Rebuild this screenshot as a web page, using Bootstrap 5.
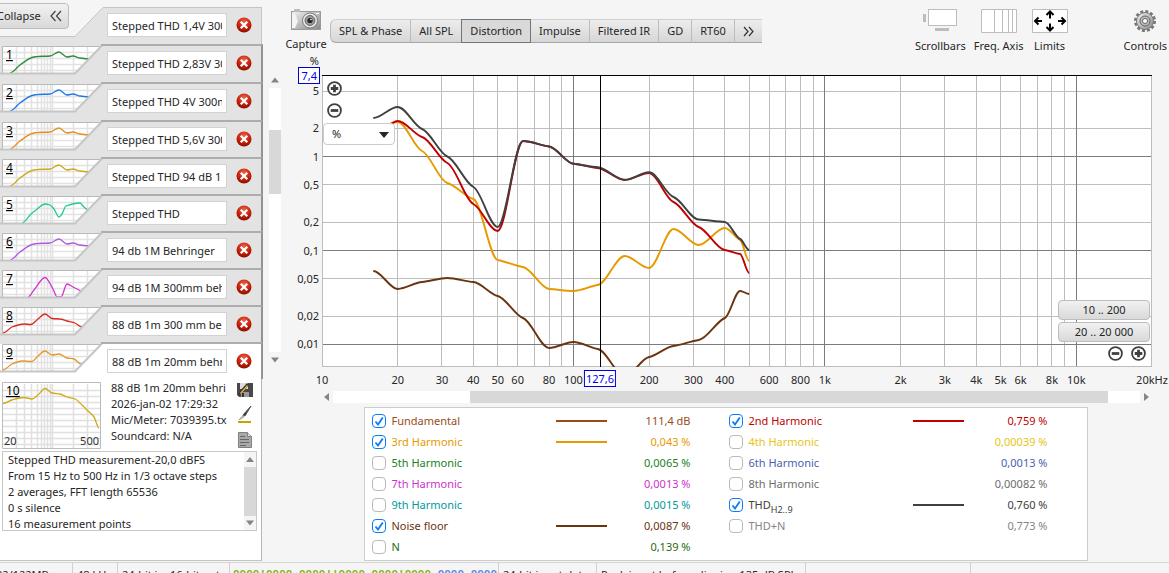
<!DOCTYPE html>
<html lang="en">
<head>
<meta charset="utf-8">
<meta name="viewport" content="width=device-width, initial-scale=1">
<title>Distortion measurements</title>
<link href="https://cdn.jsdelivr.net/npm/bootstrap@5.3.0/dist/css/bootstrap.min.css" rel="stylesheet">
<style>
:root { --ui-bg:#f5f5f5; --ink:#262626; }
body { font-family:"Noto Sans","Open Sans",sans-serif; font-size:11px; line-height:16px; color:var(--ink); background:var(--ui-bg); overflow:hidden; }
svg { display:block; }
.btn { --bs-btn-font-size:11px; --bs-btn-line-height:16px; --bs-btn-color:var(--ink); }
.soft-btn { background:linear-gradient(#f1f1f1,#d9d9d9); border:1px solid #bdbdbd; border-radius:4px; padding:0 8px; }
.icon-btn { border:0; background:none; padding:0; line-height:0; }

/* measurement list */
.side { width:263px; flex:none; }
.tabs { padding-top:7px; }
.tab-row { height:37px; }
.tab-row.tall { height:38px; }
.tab-body { background:#e3e3e3; border-top:2px solid #adadad; border-right:2px solid #929292; padding:5px 9px 0 0; }
.tab-row.first .tab-body { border-top:1px solid #c4c4c4; border-right:1px solid #c4c4c4; margin-right:1px; }
.tab-row.current .tab-body { background:#fff; }
.tab-body input { width:120px; height:24px; border:1px solid #d2d2d2; border-radius:0; padding:0 4px; line-height:16px; color:var(--ink); background:#fff; }
.collapse-btn { left:-12px; top:3px; width:81px; height:26px; padding-right:6px; }
.details { background:#fff; border-right:1px solid #b5b5b5; border-bottom:1px solid #c4c4c4; padding:3px 4px 29px 2px; margin-right:1px; }
.details .meta { width:117px; overflow:hidden; white-space:nowrap; margin:-2px 0 0 10px; }
.notes { border:1px solid #c8c8c8; height:80px; margin-top:2px; }
.notes textarea { border:0; resize:none; overflow:hidden; padding:0 0 0 5px; line-height:16px; color:var(--ink); white-space:pre; background:#fff; outline:0; }
.track { background:#fff; }
.thumb { background:#d8d8d8; }
.notes .vbar { width:12px; background:#f5f5f5; }
.list-bar { width:12px; padding-top:76px; margin:0 1px 197px 6px; }

/* header */
.topbar { height:75px; padding:8px 2px 0 0; }
.tool { text-align:center; white-space:nowrap; line-height:16px; color:var(--ink); }
.tool span { display:block; }
.capture { min-width:42px; margin-left:3px; }
.controls { margin-left:48px; }
.views { padding-top:11px; margin-left:3px; }
.views .btn { background:linear-gradient(#ededed,#d6d6d6); border:1px solid #bcbcbc; border-top-color:#d0d0d0; border-bottom-color:#a5a5a5; height:24px; padding:0 8px; white-space:nowrap; }
.views .btn.active { background:#d9d9d9; color:var(--ink); border:1px solid #757575; }

/* plot */
.plot-wrap { margin:0 17px 0 40px; }
.plot, .plot > #graph { width:100%; height:292px; }
.ylab { position:absolute; right:100%; margin-right:3px; transform:translateY(-50%); white-space:nowrap; }
.unit { top:-14px; }
.xaxis { height:24px; }
.xlab { position:absolute; transform:translateX(-50%); white-space:nowrap; top:5px; }
.readout { color:#0000f0; background:#fff; border:1px solid #0000d8; position:absolute; white-space:nowrap; line-height:15px; }
.level { right:100%; margin-right:2px; top:-8px; padding:0 2px; }
.freq { top:3px; padding:0 1px; }
.combo { position:absolute; left:1px; top:48px; width:72px; height:22px; border:1px solid #ccc; border-radius:4px; background:#fff; padding:0 8px; line-height:18px; appearance:none; color:var(--ink); }
.over { position:absolute; }
.zin { left:5px; top:6px; }
.zout { left:5px; top:28px; }
.caret { width:10px; height:6px; left:57px; top:57px; }
.range-btns { right:2px; top:225px; width:92px; }
.range-btns .btn { display:block; height:20px; width:100%; }
.range-btns .btn + .btn { margin-top:2px; }
.hbar { margin:0 17px 0 40px; height:12px; }

/* legend */
.legend { width:724px; max-width:100%; background:#fff; border:1px solid #ccc; padding:2px 0 3px 7px; margin-top:4px; }
.legend .entry { height:21px; width:357px; }
.legend input { appearance:none; width:14px; height:14px; margin:0 6px 0 0; border:1px solid #bababa; border-radius:4px; background:#fff; flex:none; }
.legend input:checked { border-color:#0a7cf5; background:url("data:image/svg+xml,%3Csvg xmlns='http://www.w3.org/2000/svg' viewBox='0 0 12 12'%3E%3Cpath d='M2.5 6.5l2.5 3L9.8 2.5' fill='none' stroke='%230a7cf5' stroke-width='1.8'/%3E%3C/svg%3E") center/12px; }
.legend .name { width:164px; }
.legend .swatch { width:51px; height:2px; }
.legend .val { width:84px; text-align:right; }
.legend sub { font-size:9px; bottom:-4px; }

.status { border-top:1px solid #d6d6d6; white-space:nowrap; line-height:24px; margin-top:1px; }
.status > div { border-right:1px solid #d0d0d0; overflow:hidden; flex:none; padding-left:4px; height:26px; }
.status .bits { font-family:"Liberation Mono",monospace; font-weight:bold; color:#86b820; line-height:22px; padding-left:3px; }
.mem { margin-left:-8px; }
</style>
</head>
<body>
<svg width="0" height="0" class="position-absolute" aria-hidden="true">
  <defs>
    <radialGradient id="redBall" cx=".5" cy=".3" r=".7"><stop offset="0" stop-color="#ee6550"/><stop offset=".6" stop-color="#c72008"/><stop offset="1" stop-color="#8c0d00"/></radialGradient>
    <linearGradient id="metal" x1="0" y1="0" x2="1" y2="1"><stop offset="0" stop-color="#f2f2f2"/><stop offset="1" stop-color="#888"/></linearGradient>
    <symbol id="close" viewBox="0 0 16 16"><circle cx="8" cy="8" r="7.5" fill="url(#redBall)"/><path d="M5.500 5.500l5 5M10.500 5.500l-5 5" stroke="#fff" stroke-width="2.2" stroke-linecap="square"/></symbol>
    <symbol id="plus" viewBox="0 0 14 14"><circle cx="7" cy="7" r="6" fill="#fff" stroke="#404040" stroke-width="1.7"/><path d="M3.500 7h7M7 3.500v7" stroke="#404040" stroke-width="2.6"/></symbol>
    <symbol id="minus" viewBox="0 0 14 14"><circle cx="7" cy="7" r="6" fill="#fff" stroke="#404040" stroke-width="1.7"/><path d="M3.500 7h7" stroke="#404040" stroke-width="2.6"/></symbol>
    <symbol id="up" viewBox="0 0 12 12"><path d="M2 8.500l4-5 4 5z" fill="#858585"/></symbol>
    <symbol id="down" viewBox="0 0 12 12"><path d="M2 3.500l4 5 4-5z" fill="#858585"/></symbol>
    <clipPath id="tabClip"><path d="M3 2H102L75 29H3z"/></clipPath>
  </defs>
</svg>

<div class="d-flex flex-column min-vh-100">
<main class="d-flex flex-grow-1">
  <aside class="side position-relative d-flex flex-column">
    <button class="btn soft-btn collapse-btn position-absolute d-flex align-items-center justify-content-between z-1" type="button">Collapse
      <svg width="12" height="12" viewBox="0 0 12 12" fill="none" stroke="#404040" stroke-width="1.2"><path d="M5.500 1L1 6l4.500 5M11 1L6.500 6l4.500 5"/></svg></button>
    <div class="tabs" id="tabs"></div>
    <section class="details flex-grow-1">
      <div class="d-flex">
        <svg width="99" height="67" viewBox="2 0 99 67" id="thumb10" class="flex-shrink-0"></svg>
        <div class="meta flex-grow-1">88 dB 1m 20mm behri<br>2026-jan-02 17:29:32<br>Mic/Meter: 7039395.tx<br>Soundcard: N/A</div>
        <div class="d-flex flex-column ms-2 me-1">
          <button class="icon-btn" type="button" aria-label="Save"><svg width="16" height="16" viewBox="0 0 16 16"><path d="M0 1h3v6h8V1h5v14H2l-2-2z" fill="#484848"/><path d="M3 1h8v6H3z" fill="#ddd"/><path d="M4 10h8v5H4z" fill="#999"/><path d="M5 11h2v4H5z" fill="#333"/><path d="M1 14l2-5 7-8 2 2-7 8z" fill="#333"/><path d="M3 11l7-8 1 1-7 8z" fill="#e7b53c"/></svg></button>
          <button class="icon-btn mt-2" type="button" aria-label="Trace colour"><svg width="16" height="18" viewBox="0 0 16 18"><path d="M14 0L6 9l2 1z" fill="#303030" stroke="#555"/><path d="M6 9l-4 5 5-3z" fill="#c7c7c7" stroke="#777" stroke-width=".5"/><path d="M1 16h13" stroke="#cca000" stroke-width="2"/></svg></button>
          <button class="icon-btn mt-2" type="button" aria-label="Notes"><svg width="16" height="16" viewBox="0 0 16 16"><path d="M1.500.5h9l4 4v11h-13z" fill="#a9a9a9" stroke="#808080"/><path d="M10.500.5v4h4" fill="#ddd" stroke="#808080"/><path d="M3 4.500h5M3 7.500h9M3 10.500h9M3 13.500h6" stroke="#666"/></svg></button>
        </div>
      </div>
      <div class="notes d-flex">
        <textarea class="flex-grow-1" readonly aria-label="Notes text" rows="5">Stepped THD measurement-20,0 dBFS
From 15 Hz to 500 Hz in 1/3 octave steps
2 averages, FFT length 65536
0 s silence
16 measurement points</textarea>
        <div class="vbar d-flex flex-column"><svg width="12" height="15" viewBox="0 -1 12 14"><use href="#up" width="12" height="12"/></svg><div class="thumb flex-grow-1"></div><svg width="12" height="14" viewBox="0 -1 12 14"><use href="#down" width="12" height="12"/></svg></div>
      </div>
    </section>
  </aside>

  <div class="list-bar d-flex flex-column flex-shrink-0">
    <svg class="mb-1 flex-shrink-0" width="12" height="8" viewBox="0 2 12 8"><use href="#up" width="12" height="12"/></svg>
    <div class="track flex-grow-1 d-flex flex-column"><div style="height:16%"></div><div class="thumb" style="height:24%"></div></div>
    <svg class="mt-1 flex-shrink-0" width="12" height="8" viewBox="0 2 12 8"><use href="#down" width="12" height="12"/></svg>
  </div>

  <section class="flex-grow-1" style="min-width:0">
    <header class="topbar d-flex align-items-start">
      <button class="icon-btn tool capture" type="button"><svg class="mx-auto mb-1" width="30" height="24" viewBox="0 -2 30 24"><rect x=".5" y="1.500" width="29" height="18" fill="url(#metal)" stroke="#999"/><path d="M1 4h3l3 7-3 7H1z" fill="#f4f4f4"/><path d="M3 -1h6v3H3z" fill="#bbb"/><circle cx="19" cy="10.500" r="7.500" fill="#eee" stroke="#777"/><circle cx="19" cy="10.500" r="5" fill="#999" stroke="#666"/><circle cx="19" cy="10.500" r="2.600" fill="#252525"/><circle cx="20" cy="9.500" r=".8" fill="#fff"/><path d="M25 3.500h3" stroke="#fff"/></svg><span>Capture</span></button>
      <div class="btn-group views" role="group" aria-label="Graph">
        <button class="btn" type="button">SPL &amp; Phase</button><button class="btn" type="button">All SPL</button><button class="btn active" type="button">Distortion</button><button class="btn" type="button">Impulse</button><button class="btn" type="button">Filtered IR</button><button class="btn" type="button">GD</button><button class="btn" type="button">RT60</button><button class="btn rounded-0 border-end-0 px-2" type="button" aria-label="More"><svg width="11" height="12" viewBox="0 0 11 12" fill="none" stroke="#333" stroke-width="1.2"><path d="M1 2l4 4.500L1 11M6 2l4 4.500L6 11"/></svg></button>
      </div>
      <div class="d-flex ms-auto gap-2">
        <button class="icon-btn tool" type="button"><svg class="mx-auto mb-1" width="34" height="26" viewBox="0 0 34 26"><rect x="5.500" y="1.500" width="28" height="16" fill="#fff" stroke="#bdbdbd"/><path d="M0 6h3v8H0zM12 20h14v3H12z" fill="#bdbdbd"/></svg><span>Scrollbars</span></button>
        <button class="icon-btn tool" type="button"><svg class="mx-auto mb-1" width="36" height="26" viewBox="0 0 36 26"><path d="M.5 1.500h35v23H.5zM13.500 1v24M21.500 1v24M27.500 1v24M31.500 1v24" fill="#fff" stroke="#bdbdbd"/></svg><span>Freq. Axis</span></button>
        <button class="icon-btn tool" type="button"><svg class="mx-auto mb-1" width="36" height="26" viewBox="0 0 36 26"><path d="M.5 1.500h35v23H.5z" fill="#fff" stroke="#bdbdbd"/><path d="M3 13h7M6.500 9.500L3 13l3.500 3.500M33 13h-7M29.500 9.500L33 13l-3.500 3.500M18 3.500v7M14.500 7L18 3.500 21.500 7M18 22.500v-7M14.500 19l3.500 3.500 3.500-3.500" fill="none" stroke="#000" stroke-width="2"/></svg><span>Limits</span></button>
        <button class="icon-btn tool controls" type="button"><svg class="mx-auto mb-1" width="24" height="26" viewBox="-12 -13 24 26"><circle r="9.500" fill="none" stroke="#777" stroke-width="3" stroke-dasharray="2.970 2"/><circle r="8.500" fill="url(#metal)" stroke="#777"/><circle r="5" fill="#bbb" stroke="#666"/><circle r="2.500" fill="#fff" stroke="#666"/></svg><span>Controls</span></button>
      </div>
    </header>

    <div class="plot-wrap">
      <div class="plot position-relative" id="plot">
        <span class="ylab unit">%</span>
        <svg viewBox="0 -1 830 292" preserveAspectRatio="none" id="graph" aria-label="Distortion graph"></svg>
        <span class="readout level">7,4</span>
        <button class="icon-btn over zin" type="button" aria-label="Zoom in vertically"><svg width="15" height="15"><use href="#plus"/></svg></button>
        <button class="icon-btn over zout" type="button" aria-label="Zoom out vertically"><svg width="15" height="15"><use href="#minus"/></svg></button>
        <select class="combo" aria-label="Unit"><option>%</option></select>
        <svg class="over caret pe-none" viewBox="0 0 10 6"><path d="M0 0h10L5 6z" fill="#262626"/></svg>
        <div class="over range-btns"><button class="btn soft-btn" type="button">10 .. 200</button><button class="btn soft-btn" type="button">20 .. 20 000</button>
          <div class="d-flex justify-content-end gap-2 pt-1 pe-1"><button class="icon-btn" type="button" aria-label="Zoom out"><svg width="15" height="15"><use href="#minus"/></svg></button><button class="icon-btn" type="button" aria-label="Zoom in"><svg width="15" height="15"><use href="#plus"/></svg></button></div></div>
      </div>
      <div class="position-relative xaxis" id="xaxis"></div>
    </div>
    <div class="hbar d-flex align-items-center">
      <svg class="flex-shrink-0" width="11" height="12"><path d="M7 2L2 6l5 4z" fill="#858585"/></svg>
      <div class="track flex-grow-1 h-100 d-flex"><div style="width:17%"></div><div class="thumb h-100" style="width:79%"></div></div>
      <svg class="flex-shrink-0" width="12" height="12"><path d="M4 2l5 4-5 4z" fill="#858585"/></svg>
    </div>
    <div class="legend d-flex mx-auto"><div id="legA"></div><div id="legB"></div></div>
  </section>
</main>

<footer class="status d-flex">
  <div style="width:73px"><span class="mem">32/122MB</span></div>
  <div style="width:45px">48 kHz</div>
  <div style="width:112px">24-bit in, 16-bit out</div>
  <div style="width:269px" class="bits">0000!0000 0000!!0000 0000!0000 <span style="color:#5b8ee6">0000 0000</span></div>
  <div style="width:98px">24-bit input data</div>
  <div style="width:209px">Peak input before clipping 135 dB SPL</div>
  <div style="width:165px"></div>
</footer>
</div>
<script src="https://cdn.jsdelivr.net/npm/bootstrap@5.3.0/dist/js/bootstrap.bundle.min.js"></script>
<script>
const byId = id => document.getElementById(id);

// Smooth path through [x, y] pairs, flat at local extremes; ease < 1 flattens it at every point.
function curve(p, ease = 1) {
  const n = p.length, d = [], m = [];
  for (let i = 0; i < n - 1; i++) d.push((p[i+1][1] - p[i][1]) / (p[i+1][0] - p[i][0]));
  for (let i = 0; i < n; i++) {
    const a = d[i-1], b = d[i];
    m.push(a === undefined || b === undefined || a * b <= 0 ? 0 : ease * 2 * a * b / (a + b));
  }
  let s = 'M' + p[0];
  const r = v => v.toFixed(1);
  for (let i = 0; i < n - 1; i++) {
    const h = (p[i+1][0] - p[i][0]) / 3;
    s += `C${r(p[i][0]+h)} ${r(p[i][1]+m[i]*h)} ${r(p[i+1][0]-h)} ${r(p[i+1][1]-m[i+1]*h)} ${p[i+1][0]} ${p[i+1][1]}`;
  }
  return s;
}
const W = 830, H = 291, dec = W / Math.log10(2000);
const fx = f => dec * Math.log10(f / 10);
const vy = v => 80.7 - 93.8 * Math.log10(v);

// Plot grid
let g = `<rect width="${W}" height="${H}" fill="#fff"/>`;
const line = (x1, y1, x2, y2, c) => `<path d="M${x1} ${y1}L${x2} ${y2}" stroke="${c}" vector-effect="non-scaling-stroke" shape-rendering="crispEdges"/>`;
for (const v of [5, 2, .5, .2, .05, .02]) g += line(0, vy(v), W, vy(v), '#bdbdbd');
for (const b of [10, 100, 1000]) for (let k = 2; k < 10; k++) g += line(fx(b*k), 0, fx(b*k), H, '#bdbdbd');
for (const v of [1, .1, .01]) g += line(0, vy(v), W, vy(v), '#7c7c7c');
for (const f of [100, 1000, 10000]) g += line(fx(f), 0, fx(f), H, '#7c7c7c');
g += line(.5, 0, .5, H, '#bdbdbd') + line(W-.5, 0, W-.5, H, '#bdbdbd') + line(0, H-.5, W, H-.5, '#bdbdbd');

// Traces, height in plot units at each 1/3 octave
const freqs = [16, 20, 25, 31.5, 40, 50, 63, 80, 100, 125, 160, 200, 250, 315, 400, 460, 500];
const traces = [
  ['#6b3410', [195,213,206,202,206,220,242,272,266,273,300,281,270,264,242,215,218]],
  ['#e69a00', [54,46,75,107,123,184,191,213,215,209,180,192,153,169,152,164,185]],
  ['#c00000', [60,45,61,87,128,155,65,70.5,87.7,92,104,97,126,151,174,178,197]],
  ['#404040', [42,31,53,80.5,111,151,65,70.5,87.7,91.3,103.8,96.3,121,143.5,146,163,174]]
];
for (const [c, y] of traces)
  g += `<path d="${curve(freqs.map((f, i) => [+fx(f).toFixed(1), y[i]]), 0.35)}" fill="none" stroke="${c}" stroke-width="1.9" vector-effect="non-scaling-stroke"/>`;
g += line(fx(127.6), 0, fx(127.6), H, '#000') + line(0, -.5, W, -.5, '#000');
byId('graph').innerHTML = g;

for (const v of [5, 2, 1, .5, .2, .1, .05, .02, .01])
  byId('plot').insertAdjacentHTML('beforeend', `<span class="ylab" style="top:${Math.round(vy(v)) + 1}px">${String(v).replace('.', ',')}</span>`);
for (const [f, t] of [[10,'10'],[20,'20'],[30,'30'],[40,'40'],[50,'50'],[60,'60'],[80,'80'],[100,'100'],[200,'200'],[300,'300'],[400,'400'],[600,'600'],[800,'800'],[1000,'1k'],[2000,'2k'],[3000,'3k'],[4000,'4k'],[5000,'5k'],[6000,'6k'],[8000,'8k'],[10000,'10k'],[20000,'20kHz']])
  byId('xaxis').insertAdjacentHTML('beforeend', `<span class="xlab" style="left:${fx(f) / W * 100}%">${t}</span>`);
byId('xaxis').insertAdjacentHTML('beforeend', `<span class="xlab readout freq" style="left:${fx(127.6) / W * 100}%">127,6</span>`);

// Measurement tabs
const wide = [[10,29],[20,21],[32,13.5],[38,12.5],[50,12],[59,8],[67,13],[73,12],[80,14],[90,15]];
const rows = [
  ['Stepped THD 1,4V 300mm'],
  ['Stepped THD 2,83V 300mm', '#2e8b3a', wide],
  ['Stepped THD 4V 300mm', '#1e7be6', wide],
  ['Stepped THD 5,6V 300mm', '#ea8f1c', wide],
  ['Stepped THD 94 dB 1M', '#cfaa18', wide],
  ['Stepped THD', '#20c997', [[22,29],[31,20],[36,16],[45,10],[50,11],[54,15],[59,23],[62,20],[66,12],[80,9],[84,13],[88,16]]],
  ['94 db 1M Behringer', '#b05ae0', wide],
  ['94 dB 1M 300mm behringer', '#d632d0', [[28,29],[34,22],[45,9.5],[53,21],[57,29],[61,29],[67,16],[73,19],[79,22],[81,23]]],
  ['88 dB 1m 300 mm behringer', '#d82a20', [[3,28],[12,22],[24,19],[31,19.5],[38,14],[45,9],[52,13.5],[60,14],[67,16],[75,18],[82,22]]],
  ['88 dB 1m 20mm behringer', '#e8962a', [[3,28],[12,22],[22,19],[32,19.5],[38,14],[45,9],[52,13],[59,12],[67,16],[74,17],[81,22]]]
];
const gridX = [16,24,31,37,41,44,47,50,52,73,87];
const mini = h => gridX.map(x => `M${x}.5 2V${h}`).join('') + Array.from({length: Math.floor(h / 6)}, (_, i) => `M3 ${i*6+8}.5H101`).join('');
rows.forEach(([name, c, pts], i) => {
  const h = i == 1 || i == 2 ? 38 : 37;
  const bg = i == 9 ? '#fff' : '#e3e3e3';
  const art = i == 0
    ? `<path d="M75 29.5L103 .5h4V38H0v-8.5z" fill="#e3e3e3"/><path d="M0 29.5h75L103 .5h4" fill="none" stroke="#c4c4c4"/>`
    : `<path d="M0 0h107v38H0z" fill="${bg}"/><path d="M0 0h103l-1 2H0z" fill="#e3e3e3"/><path d="M3 2H101L75 29H3z" fill="#fff"/><g clip-path="url(#tabClip)" fill="none"><path d="${mini(29)}" stroke="#e2e2e2" stroke-width="1.5"/><path d="${curve(pts)}" stroke="${c}" stroke-width="1.3"/></g><path d="M2.5 29V2.5H100" fill="none" stroke="#b9b9b9"/><path d="M0 29.5h75L102 1.5" fill="none" stroke="#c6c6c6" stroke-width="2"/><path d="M101 1h6" stroke="#adadad" stroke-width="2"/><text x="6" y="15" font-size="12" fill="#000" text-decoration="underline">${i}</text>`;
  byId('tabs').insertAdjacentHTML('beforeend', `<div class="tab-row d-flex ${h == 38 ? 'tall' : ''} ${i == 0 ? 'first' : ''} ${i == 9 ? 'current' : ''}"><svg width="107" height="${h}" class="flex-shrink-0">${art}</svg><div class="tab-body flex-grow-1 d-flex align-items-start justify-content-between"><input type="text" value="${name}" aria-label="Measurement ${i} name"><button class="icon-btn mt-1" type="button" aria-label="Remove ${name}"><svg width="16" height="16"><use href="#close"/></svg></button></div></div>`);
});
const last = [[3,21.5],[12,18],[24,15.5],[32,17],[38,13],[45,6.5],[52,11],[60,12],[67,15],[75,17],[82,23],[88,29],[94,35],[99,46]];
byId('thumb10').innerHTML = `<path d="M2.5.5h98v66h-98z" fill="#fff"/><path d="${mini(66)}" stroke="#e0e0e0" stroke-width="1.5"/><path d="M2.5.5h98v66h-98z" fill="none" stroke="#bbb"/><path d="${curve(last)}" fill="none" stroke="#cfaa18" stroke-width="1.3"/><text x="6" y="13" font-size="12" text-decoration="underline">10</text><text x="4" y="63" fill="#333">20</text><text x="99" y="63" fill="#333" text-anchor="end">500</text>`;

// Legend
const legend = (el, list) => list.forEach(([n, c, v, on], i) => {
  const id = el.id + i;
  el.insertAdjacentHTML('beforeend', `<div class="entry d-flex align-items-center" style="color:${c}"><input type="checkbox" id="${id}" ${on ? 'checked' : ''}><label class="name" for="${id}">${n}</label><span class="swatch" style="background:${on ? c : 'none'}"></span><span class="val">${v}</span></div>`);
});
legend(byId('legA'), [['Fundamental','#994c1a','111,4 dB',1],['3rd Harmonic','#e69a00','0,043 %',1],['5th Harmonic','#208020','0,0065 %'],['7th Harmonic','#cc33cc','0,0013 %'],['9th Harmonic','#009999','0,0015 %'],['Noise floor','#6b3410','0,0087 %',1],['N','#2b6b10','0,139 %']]);
legend(byId('legB'), [['2nd Harmonic','#c00000','0,759 %',1],['4th Harmonic','#e6c619','0,00039 %'],['6th Harmonic','#4a63ad','0,0013 %'],['8th Harmonic','#6e6e6e','0,00082 %'],['THD<sub>H2..9</sub>','#404040','0,760 %',1],['THD+N','#858585','0,773 %']]);
</script>
</body>
</html>
